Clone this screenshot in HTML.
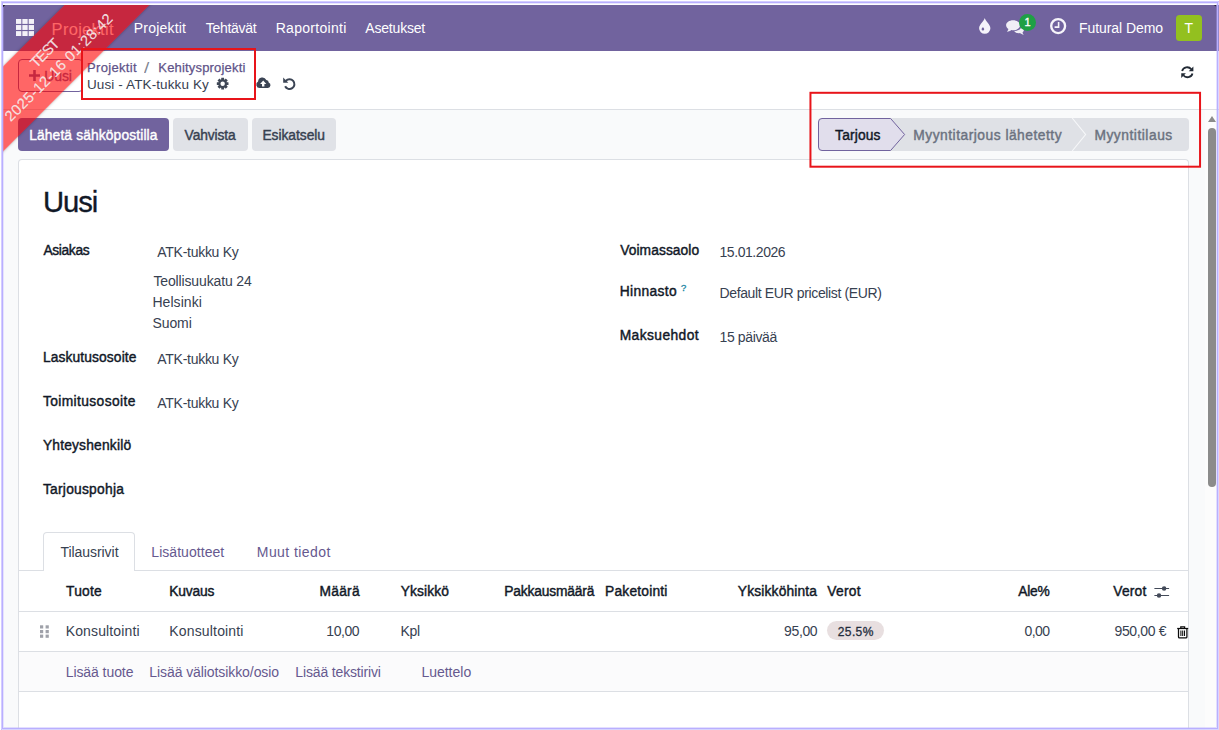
<!DOCTYPE html>
<html lang="fi">
<head>
<meta charset="utf-8">
<title>Odoo - Uusi - ATK-tukku Ky</title>
<style>
html,body{margin:0;padding:0}
body{width:1219px;height:730px;position:relative;overflow:hidden;background:#fff;font-family:"Liberation Sans",sans-serif;font-size:14px;line-height:20px;color:#374151}
.a{position:absolute;box-sizing:border-box}
.t{position:absolute;white-space:pre;line-height:20px;height:20px}
svg{position:absolute;overflow:visible}
#page{left:3px;top:5px;width:1216px;height:725px;background:#f9fafb;overflow:hidden}
#nav{left:3px;top:5px;width:1216px;height:46px;background:#71639e}
#cp{left:3px;top:51px;width:1216px;height:59px;background:#fff;border-bottom:1px solid #dcdfe4}
#sheet{left:18px;top:159px;width:1171px;height:569px;background:#fff;border:1px solid #dcdfe4;border-bottom:0;border-radius:4px 4px 0 0}
.btn{height:33px;top:118px;border-radius:4px}
#clip{left:3px;top:5px;width:1213px;height:722px;overflow:hidden;pointer-events:none}
#ribbon{left:-101.5px;top:25px;width:300px;height:60px;background:rgba(255,0,0,.6);transform:rotate(-45deg);box-shadow:0 0 3px rgba(0,0,0,.3)}
.red{border:2px solid #e8141a}
.hl{background:#dcdfe4;height:1px}

</style>
</head>
<body>
<div id="page" class="a"></div>

<!-- navbar -->
<div id="nav" class="a"></div>
<svg style="left:16px;top:19px" width="18" height="17" viewBox="0 0 18 17" fill="#f3f1f8">
<rect x="0" y="0" width="5.3" height="4.9"/><rect x="6.35" y="0" width="5.3" height="4.9"/><rect x="12.7" y="0" width="5.3" height="4.9"/>
<rect x="0" y="6.05" width="5.3" height="4.9"/><rect x="6.35" y="6.05" width="5.3" height="4.9"/><rect x="12.7" y="6.05" width="5.3" height="4.9"/>
<rect x="0" y="12.1" width="5.3" height="4.9"/><rect x="6.35" y="12.1" width="5.3" height="4.9"/><rect x="12.7" y="12.1" width="5.3" height="4.9"/>
</svg>
<svg style="left:978.8px;top:18.4px" width="12" height="16" viewBox="0 0 12 16"><path fill="#f5f3fa" fill-rule="evenodd" d="M5.75 0 C5.3 2.9 0.1 6.3 0.1 10.3 A5.65 5.5 0 0 0 11.4 10.3 C11.4 6.3 6.2 2.9 5.75 0 Z M3.4 9.6 C3.3 10.1 2.6 10.5 2.6 11.3 A1.3 1.3 0 0 0 5.2 11.3 C5.2 10.5 4.5 10.1 4.4 9.6 C4.3 9.3 3.5 9.3 3.4 9.6 Z"/></svg>
<svg style="left:1006px;top:19.6px" width="18" height="15" viewBox="0 0 18 15"><g fill="#f0eef6"><path d="M8.2 10.9 C8.9 12.3 10.6 13.2 12.6 13.2 C13.1 13.2 13.5 13.1 13.9 13 C14.9 13.8 16.2 14.6 17.8 14.8 C17.2 14.1 16.7 13.3 16.5 12.4 C17.4 11.7 17.9 10.8 17.9 9.8 C17.9 8.5 16.9 7.3 15.4 6.7 C15 9.1 12.1 10.9 8.6 10.9 Z"/><path d="M7.1 0.3 C3.2 0.3 0.1 2.5 0.1 5.3 C0.1 6.8 1 8.1 2.4 9 C2.2 10 1.6 11 0.8 11.8 C2.5 11.7 4.2 11 5.4 10.1 C5.9 10.2 6.5 10.3 7.1 10.3 C11 10.3 14.1 8.1 14.1 5.3 C14.1 2.5 11 0.3 7.1 0.3 Z" stroke="#71639e" stroke-width="0.9" paint-order="stroke"/></g></svg>
<svg style="left:1050px;top:18.3px" width="17" height="17" viewBox="0 0 17 17"><circle cx="8.15" cy="8.1" r="6.95" fill="none" stroke="#f6f4fa" stroke-width="2.35"/><path d="M8.6 4 V9.1 H4.6" fill="none" stroke="#f6f4fa" stroke-width="1.6"/></svg>
<div class="a" style="left:1176px;top:15px;width:26px;height:26px;border-radius:3.5px;background:#93c01f"></div>
<div class="a" style="left:1019px;top:14px;width:17px;height:17px;border-radius:50%;background:#1fa045"></div>
<nav><span class="t" style="left:51.60px;top:18.50px;font-size:16.5px;letter-spacing:0.285px;color:#ffffff">Projektit</span>
<span class="t" style="left:133.80px;top:18.00px;font-size:14px;letter-spacing:0.192px;color:#ffffff">Projektit</span>
<span class="t" style="left:205.80px;top:18.00px;font-size:14px;letter-spacing:-0.286px;color:#ffffff">Tehtävät</span>
<span class="t" style="left:275.70px;top:18.00px;font-size:14px;letter-spacing:0.302px;color:#ffffff">Raportointi</span>
<span class="t" style="left:365.30px;top:18.00px;font-size:14px;letter-spacing:-0.190px;color:#ffffff">Asetukset</span>
<span class="t" style="left:1079.00px;top:18.00px;font-size:14px;letter-spacing:-0.071px;color:#ffffff">Futural Demo</span>
<span class="t" style="left:1184.60px;top:18.00px;font-size:14px;letter-spacing:0.000px;color:#ffffff">T</span>
<span class="t" style="left:1024.60px;top:12.00px;font-size:11px;letter-spacing:0.000px;color:#ffffff;-webkit-text-stroke-width:0.35px">1</span></nav>

<!-- control panel -->
<div id="cp" class="a"></div>
<div class="a" style="left:18px;top:59px;width:65px;height:33px;border:1px solid #71639e;border-radius:4px"></div>
<svg style="left:29px;top:70px" width="11" height="11" viewBox="0 0 11 11"><path d="M4.2 0 H6.8 V4.2 H11 V6.8 H6.8 V11 H4.2 V6.8 H0 V4.2 H4.2 Z" fill="#71639e"/></svg>
<svg style="left:215.9px;top:77.3px" width="13.3" height="13.3" viewBox="-7 -7 14 14"><g fill="#3f4756"><path fill-rule="evenodd" d="M0 -4.5 A4.5 4.5 0 1 0 0 4.5 A4.5 4.5 0 1 0 0 -4.5 Z M0 -2.35 A2.35 2.35 0 1 1 0 2.35 A2.35 2.35 0 1 1 0 -2.35 Z"/><rect x="-1.5" y="-6.15" width="3" height="3.2" rx="0.3" transform="rotate(0)"/><rect x="-1.5" y="-6.15" width="3" height="3.2" rx="0.3" transform="rotate(45)"/><rect x="-1.5" y="-6.15" width="3" height="3.2" rx="0.3" transform="rotate(90)"/><rect x="-1.5" y="-6.15" width="3" height="3.2" rx="0.3" transform="rotate(135)"/><rect x="-1.5" y="-6.15" width="3" height="3.2" rx="0.3" transform="rotate(180)"/><rect x="-1.5" y="-6.15" width="3" height="3.2" rx="0.3" transform="rotate(225)"/><rect x="-1.5" y="-6.15" width="3" height="3.2" rx="0.3" transform="rotate(270)"/><rect x="-1.5" y="-6.15" width="3" height="3.2" rx="0.3" transform="rotate(315)"/></g></svg>
<svg style="left:256px;top:77.4px" width="15" height="11" viewBox="0 0 15 11"><path fill="#3b4454" d="M3.6 11 A3.4 3.4 0 0 1 2.1 4.6 A4.3 4.3 0 0 1 10.3 3 A2.6 2.6 0 0 1 12.7 5.6 A2.8 2.8 0 0 1 11.9 11 Z"/><path fill="#fff" d="M7.2 3.6 L10.3 6.9 H8.4 V9.6 H6 V6.9 H4.1 Z"/></svg>
<svg style="left:283.1px;top:77.3px" width="12.6" height="12.6" viewBox="0 0 13 13"><path d="M2.9 4.1 A5.05 5.05 0 1 1 2.2 9.6" fill="none" stroke="#3b4454" stroke-width="2.1"/><path d="M0.2 0.6 L0.2 5.9 H5.5 Z" fill="#3b4454"/></svg>
<svg style="left:1180.5px;top:65.5px" width="12.6" height="12.5" viewBox="0 0 13 13"><g fill="none" stroke="#222a35" stroke-width="1.9"><path d="M1.1 5.3 A5.4 5.4 0 0 1 10.6 3.4"/><path d="M11.9 7.7 A5.4 5.4 0 0 1 2.4 9.6"/></g><path d="M12.8 0.6 V5.4 H8 Z" fill="#222a35"/><path d="M0.2 12.4 V7.6 H5 Z" fill="#222a35"/></svg>
<header><span class="t" style="left:44.30px;top:65.70px;font-size:14px;letter-spacing:-0.153px;color:#71639e;-webkit-text-stroke-width:0.3px">Uusi</span>
<span class="t" style="left:87.10px;top:58.00px;font-size:13px;letter-spacing:0.310px;color:#5f5389;-webkit-text-stroke-width:0.25px">Projektit</span>
<span class="t" style="left:144.40px;top:57.50px;font-size:14px;letter-spacing:0.000px;color:#7f8592;transform:scaleX(1.35);transform-origin:0 50%">/</span>
<span class="t" style="left:158.30px;top:58.00px;font-size:13px;letter-spacing:0.177px;color:#5f5389;-webkit-text-stroke-width:0.25px">Kehitysprojekti</span>
<span class="t" style="left:87.00px;top:74.90px;font-size:13.5px;letter-spacing:0.112px;color:#374151">Uusi - ATK-tukku Ky</span></header>

<!-- action buttons + statusbar -->
<div class="a btn" style="left:18px;width:151px;background:#71639e"></div>
<div class="a btn" style="left:173px;width:75px;background:#e0e2e7"></div>
<div class="a btn" style="left:252px;width:84px;background:#e0e2e7"></div>
<svg style="left:818px;top:118px" width="372" height="33" viewBox="0 0 372 33"><rect x="0" y="0" width="371" height="33" rx="4" fill="#dfe1e6"/><path d="M4 0.5 H72.6 L86.6 16.5 L72.6 32.5 H4 A3.5 3.5 0 0 1 0.5 29 V4 A3.5 3.5 0 0 1 4 0.5 Z" fill="#e1deec" stroke="#71639e" stroke-width="1"/><path d="M254.2 0 L267.6 16.5 L254.2 33" fill="none" stroke="#f7f8fa" stroke-width="1.1"/></svg>

<!-- form sheet -->
<div id="sheet" class="a"></div>
<div class="a hl" style="left:19px;top:570px;width:1169px"></div>
<div class="a" style="left:43px;top:532px;width:92px;height:39px;border:1px solid #dcdfe4;border-bottom:0;border-radius:4px 4px 0 0;background:#fff"></div>
<div class="a hl" style="left:19px;top:611px;width:1169px"></div>
<div class="a" style="left:19px;top:651px;width:1169px;height:41px;background:#fbfbfc;border-top:1px solid #dcdfe4;border-bottom:1px solid #dcdfe4"></div>
<div class="a" style="left:827px;top:621px;width:57px;height:19px;border-radius:10px;background:#e8dfe0"></div>
<svg style="left:40px;top:625px" width="9" height="13" viewBox="0 0 9 13" fill="#9fa1a9"><rect x="0" y="0.3" width="3.2" height="3.2"/><rect x="5.6" y="0.3" width="3.2" height="3.2"/><rect x="0" y="5" width="3.2" height="3.2"/><rect x="5.6" y="5" width="3.2" height="3.2"/><rect x="0" y="9.6" width="3.2" height="3.2"/><rect x="5.6" y="9.6" width="3.2" height="3.2"/></svg>
<svg style="left:1154px;top:585px" width="16" height="14" viewBox="0 0 16 14"><g stroke="#434a59" stroke-width="1"><path d="M0.4 3.5 H15.1"/><path d="M0.4 10.5 H15.1"/></g><circle cx="10.1" cy="3.5" r="2.25" fill="#434a59"/><circle cx="5" cy="10.5" r="2.25" fill="#434a59"/></svg>
<svg style="left:1176.6px;top:625.6px" width="12" height="13" viewBox="0 0 12 13"><g fill="none" stroke="#0b0b0b" stroke-width="1.25"><path d="M0.2 2.5 H11.2"/><path d="M3.8 2.3 V0.8 H7.6 V2.3"/><path d="M1.5 2.7 V10.9 A1 1 0 0 0 2.5 11.9 H8.9 A1 1 0 0 0 9.9 10.9 V2.7"/></g><path d="M3.9 4.4 V10.1 M5.7 4.4 V10.1 M7.5 4.4 V10.1" stroke="#0b0b0b" stroke-width="1.05" fill="none"/></svg>
<main><span class="t" style="left:29.20px;top:125.50px;font-size:13.8px;letter-spacing:0.131px;color:#ffffff;-webkit-text-stroke-width:0.42px">Lähetä sähköpostilla</span>
<span class="t" style="left:184.60px;top:125.50px;font-size:13.8px;letter-spacing:-0.111px;color:#374151;-webkit-text-stroke-width:0.42px">Vahvista</span>
<span class="t" style="left:262.40px;top:125.50px;font-size:13.8px;letter-spacing:-0.029px;color:#374151;-webkit-text-stroke-width:0.42px">Esikatselu</span>
<span class="t" style="left:835.10px;top:125.50px;font-size:13.8px;letter-spacing:0.142px;color:#111827;-webkit-text-stroke-width:0.42px">Tarjous</span>
<span class="t" style="left:913.30px;top:125.50px;font-size:13.8px;letter-spacing:0.499px;color:#6b7280;-webkit-text-stroke-width:0.42px">Myyntitarjous lähetetty</span>
<span class="t" style="left:1094.40px;top:125.50px;font-size:13.8px;letter-spacing:0.524px;color:#6b7280;-webkit-text-stroke-width:0.42px">Myyntitilaus</span>
<span class="t" style="left:42.90px;top:192.40px;font-size:29.2px;letter-spacing:-1.000px;color:#111827;-webkit-text-stroke-width:0.35px">Uusi</span>
<span class="t" style="left:43.40px;top:240.50px;font-size:13.8px;letter-spacing:-0.340px;color:#111827;-webkit-text-stroke-width:0.42px">Asiakas</span>
<span class="t" style="left:42.90px;top:347.50px;font-size:13.8px;letter-spacing:0.117px;color:#111827;-webkit-text-stroke-width:0.42px">Laskutusosoite</span>
<span class="t" style="left:42.90px;top:391.50px;font-size:13.8px;letter-spacing:0.385px;color:#111827;-webkit-text-stroke-width:0.42px">Toimitusosoite</span>
<span class="t" style="left:42.90px;top:435.50px;font-size:13.8px;letter-spacing:0.190px;color:#111827;-webkit-text-stroke-width:0.42px">Yhteyshenkilö</span>
<span class="t" style="left:42.90px;top:479.50px;font-size:13.8px;letter-spacing:0.251px;color:#111827;-webkit-text-stroke-width:0.42px">Tarjouspohja</span>
<span class="t" style="left:157.30px;top:242.00px;font-size:14px;letter-spacing:-0.275px;color:#374151">ATK-tukku Ky</span>
<span class="t" style="left:153.40px;top:270.80px;font-size:14px;letter-spacing:-0.135px;color:#374151">Teollisuukatu 24</span>
<span class="t" style="left:152.40px;top:291.80px;font-size:14px;letter-spacing:0.069px;color:#374151">Helsinki</span>
<span class="t" style="left:152.40px;top:312.80px;font-size:14px;letter-spacing:-0.065px;color:#374151">Suomi</span>
<span class="t" style="left:157.30px;top:349.00px;font-size:14px;letter-spacing:-0.275px;color:#374151">ATK-tukku Ky</span>
<span class="t" style="left:157.30px;top:393.00px;font-size:14px;letter-spacing:-0.275px;color:#374151">ATK-tukku Ky</span>
<span class="t" style="left:620.20px;top:240.50px;font-size:13.8px;letter-spacing:0.074px;color:#111827;-webkit-text-stroke-width:0.42px">Voimassaolo</span>
<span class="t" style="left:619.70px;top:281.50px;font-size:13.8px;letter-spacing:0.357px;color:#111827;-webkit-text-stroke-width:0.42px">Hinnasto</span>
<span class="t" style="left:681.00px;top:277.60px;font-size:9.5px;letter-spacing:0.000px;color:#1c86a3;-webkit-text-stroke-width:0.3px">?</span>
<span class="t" style="left:619.70px;top:325.50px;font-size:13.8px;letter-spacing:0.413px;color:#111827;-webkit-text-stroke-width:0.42px">Maksuehdot</span>
<span class="t" style="left:719.50px;top:242.00px;font-size:14px;letter-spacing:-0.440px;color:#374151">15.01.2026</span>
<span class="t" style="left:719.50px;top:283.00px;font-size:14px;letter-spacing:-0.366px;color:#374151">Default EUR pricelist (EUR)</span>
<span class="t" style="left:719.50px;top:327.00px;font-size:14px;letter-spacing:-0.375px;color:#374151">15 päivää</span>
<span class="t" style="left:60.40px;top:542.00px;font-size:14px;letter-spacing:-0.046px;color:#374151">Tilausrivit</span>
<span class="t" style="left:151.30px;top:542.00px;font-size:14px;letter-spacing:0.045px;color:#66598f">Lisätuotteet</span>
<span class="t" style="left:256.80px;top:542.00px;font-size:14px;letter-spacing:0.422px;color:#66598f">Muut tiedot</span>
<span class="t" style="left:66.00px;top:581.50px;font-size:13.8px;letter-spacing:0.250px;color:#111827;-webkit-text-stroke-width:0.42px">Tuote</span>
<span class="t" style="left:169.30px;top:581.50px;font-size:13.8px;letter-spacing:-0.196px;color:#111827;-webkit-text-stroke-width:0.42px">Kuvaus</span>
<span class="t" style="left:319.50px;top:581.50px;font-size:13.8px;letter-spacing:0.260px;color:#111827;-webkit-text-stroke-width:0.42px">Määrä</span>
<span class="t" style="left:400.80px;top:581.50px;font-size:13.8px;letter-spacing:0.083px;color:#111827;-webkit-text-stroke-width:0.42px">Yksikkö</span>
<span class="t" style="left:504.30px;top:581.50px;font-size:13.8px;letter-spacing:-0.182px;color:#111827;-webkit-text-stroke-width:0.42px">Pakkausmäärä</span>
<span class="t" style="left:605.10px;top:581.50px;font-size:13.8px;letter-spacing:0.193px;color:#111827;-webkit-text-stroke-width:0.42px">Paketointi</span>
<span class="t" style="left:737.80px;top:581.50px;font-size:13.8px;letter-spacing:0.162px;color:#111827;-webkit-text-stroke-width:0.42px">Yksikköhinta</span>
<span class="t" style="left:827.20px;top:581.50px;font-size:13.8px;letter-spacing:0.320px;color:#111827;-webkit-text-stroke-width:0.42px">Verot</span>
<span class="t" style="left:1018.20px;top:581.50px;font-size:13.8px;letter-spacing:-0.173px;color:#111827;-webkit-text-stroke-width:0.42px">Ale%</span>
<span class="t" style="left:1113.30px;top:581.50px;font-size:13.8px;letter-spacing:0.195px;color:#111827;-webkit-text-stroke-width:0.42px">Verot</span>
<span class="t" style="left:65.70px;top:620.80px;font-size:14px;letter-spacing:0.140px;color:#374151">Konsultointi</span>
<span class="t" style="left:169.30px;top:620.80px;font-size:14px;letter-spacing:0.162px;color:#374151">Konsultointi</span>
<span class="t" style="left:326.30px;top:620.80px;font-size:14px;letter-spacing:-0.435px;color:#374151">10,00</span>
<span class="t" style="left:400.50px;top:620.80px;font-size:14px;letter-spacing:-0.260px;color:#374151">Kpl</span>
<span class="t" style="left:784.10px;top:620.80px;font-size:14px;letter-spacing:-0.375px;color:#374151">95,00</span>
<span class="t" style="left:837.80px;top:621.80px;font-size:12px;letter-spacing:0.380px;color:#242d3c;-webkit-text-stroke-width:0.3px">25.5%</span>
<span class="t" style="left:1024.60px;top:620.80px;font-size:14px;letter-spacing:-0.587px;color:#374151">0,00</span>
<span class="t" style="left:1114.50px;top:620.80px;font-size:14px;letter-spacing:-0.360px;color:#374151">950,00 €</span>
<span class="t" style="left:65.70px;top:662.00px;font-size:14px;letter-spacing:-0.074px;color:#66598f">Lisää tuote</span>
<span class="t" style="left:149.30px;top:662.00px;font-size:14px;letter-spacing:-0.083px;color:#66598f">Lisää väliotsikko/osio</span>
<span class="t" style="left:295.30px;top:662.00px;font-size:14px;letter-spacing:-0.149px;color:#66598f">Lisää tekstirivi</span>
<span class="t" style="left:421.40px;top:662.00px;font-size:14px;letter-spacing:-0.006px;color:#66598f">Luettelo</span></main>

<!-- scrollbar -->
<div class="a" style="left:1205px;top:110px;width:14px;height:620px;background:#fcfcfc"></div>
<svg style="left:1208px;top:116px" width="8" height="6" viewBox="0 0 8 6"><path d="M0 6 L4 0 L8 6 Z" fill="#8b8b8b"/></svg>
<div class="a" style="left:1208px;top:128px;width:8px;height:359px;border-radius:4px;background:#8b8b8b"></div>

<!-- environment ribbon -->
<div id="clip" class="a"><div id="ribbon" class="a"><span class="t" style="left:132.70px;top:10.00px;font-size:14.8px;letter-spacing:-1.073px;color:rgba(245,240,240,.9);-webkit-text-stroke-width:0.15px">TEST</span>
<span class="t" style="left:76.80px;top:30.20px;font-size:14.8px;letter-spacing:0.444px;color:rgba(245,240,240,.9);-webkit-text-stroke-width:0.15px">2025-12-16 01:28:42</span></div></div>

<!-- annotation rectangles -->
<svg style="left:0;top:0" width="1219" height="730" viewBox="0 0 1219 730"><g fill="none" stroke="#e8141a" stroke-width="2"><rect x="82" y="49" width="173" height="50"/><rect x="810.45" y="92.8" width="389.6" height="73.9"/></g></svg>

<!-- screenshot frame -->
<div class="a" style="left:0;top:0;width:1219px;height:5px;background:#fff"></div>
<div class="a" style="left:0;top:0;width:3px;height:730px;background:#fff"></div>
<div class="a" style="left:1px;top:1px;width:1218px;height:729px;border:1px solid #d3ccff;border-right:0;border-bottom:0"></div>
<div class="a" style="left:2px;top:2px;width:1216px;height:727px;border:1px solid #b9afff"></div>
<div class="a" style="left:3px;top:3px;width:1213px;height:1px;background:rgba(185,176,255,.3)"></div>
<div class="a" style="left:3px;top:5px;width:1px;height:722px;background:rgba(185,176,255,.3)"></div>
<div class="a" style="left:1216px;top:3px;width:1px;height:725px;background:rgba(185,176,255,.38)"></div>
<div class="a" style="left:3px;top:727px;width:1213px;height:1px;background:rgba(185,176,255,.4)"></div>
<div class="a" style="left:1218px;top:1px;width:1px;height:729px;background:rgba(185,176,255,.52)"></div>
<div class="a" style="left:1px;top:729px;width:1217px;height:1px;background:rgba(185,176,255,.52)"></div>
<svg style="left:3px;top:5px" width="1213" height="3" viewBox="0 0 1213 3"><path d="M0 0 H2.2 L0 2.2 Z" fill="#1c1a22"/><path d="M1213 0 H1210.6 L1213 1.6 Z" fill="#2a2535"/></svg>
</body>
</html>
